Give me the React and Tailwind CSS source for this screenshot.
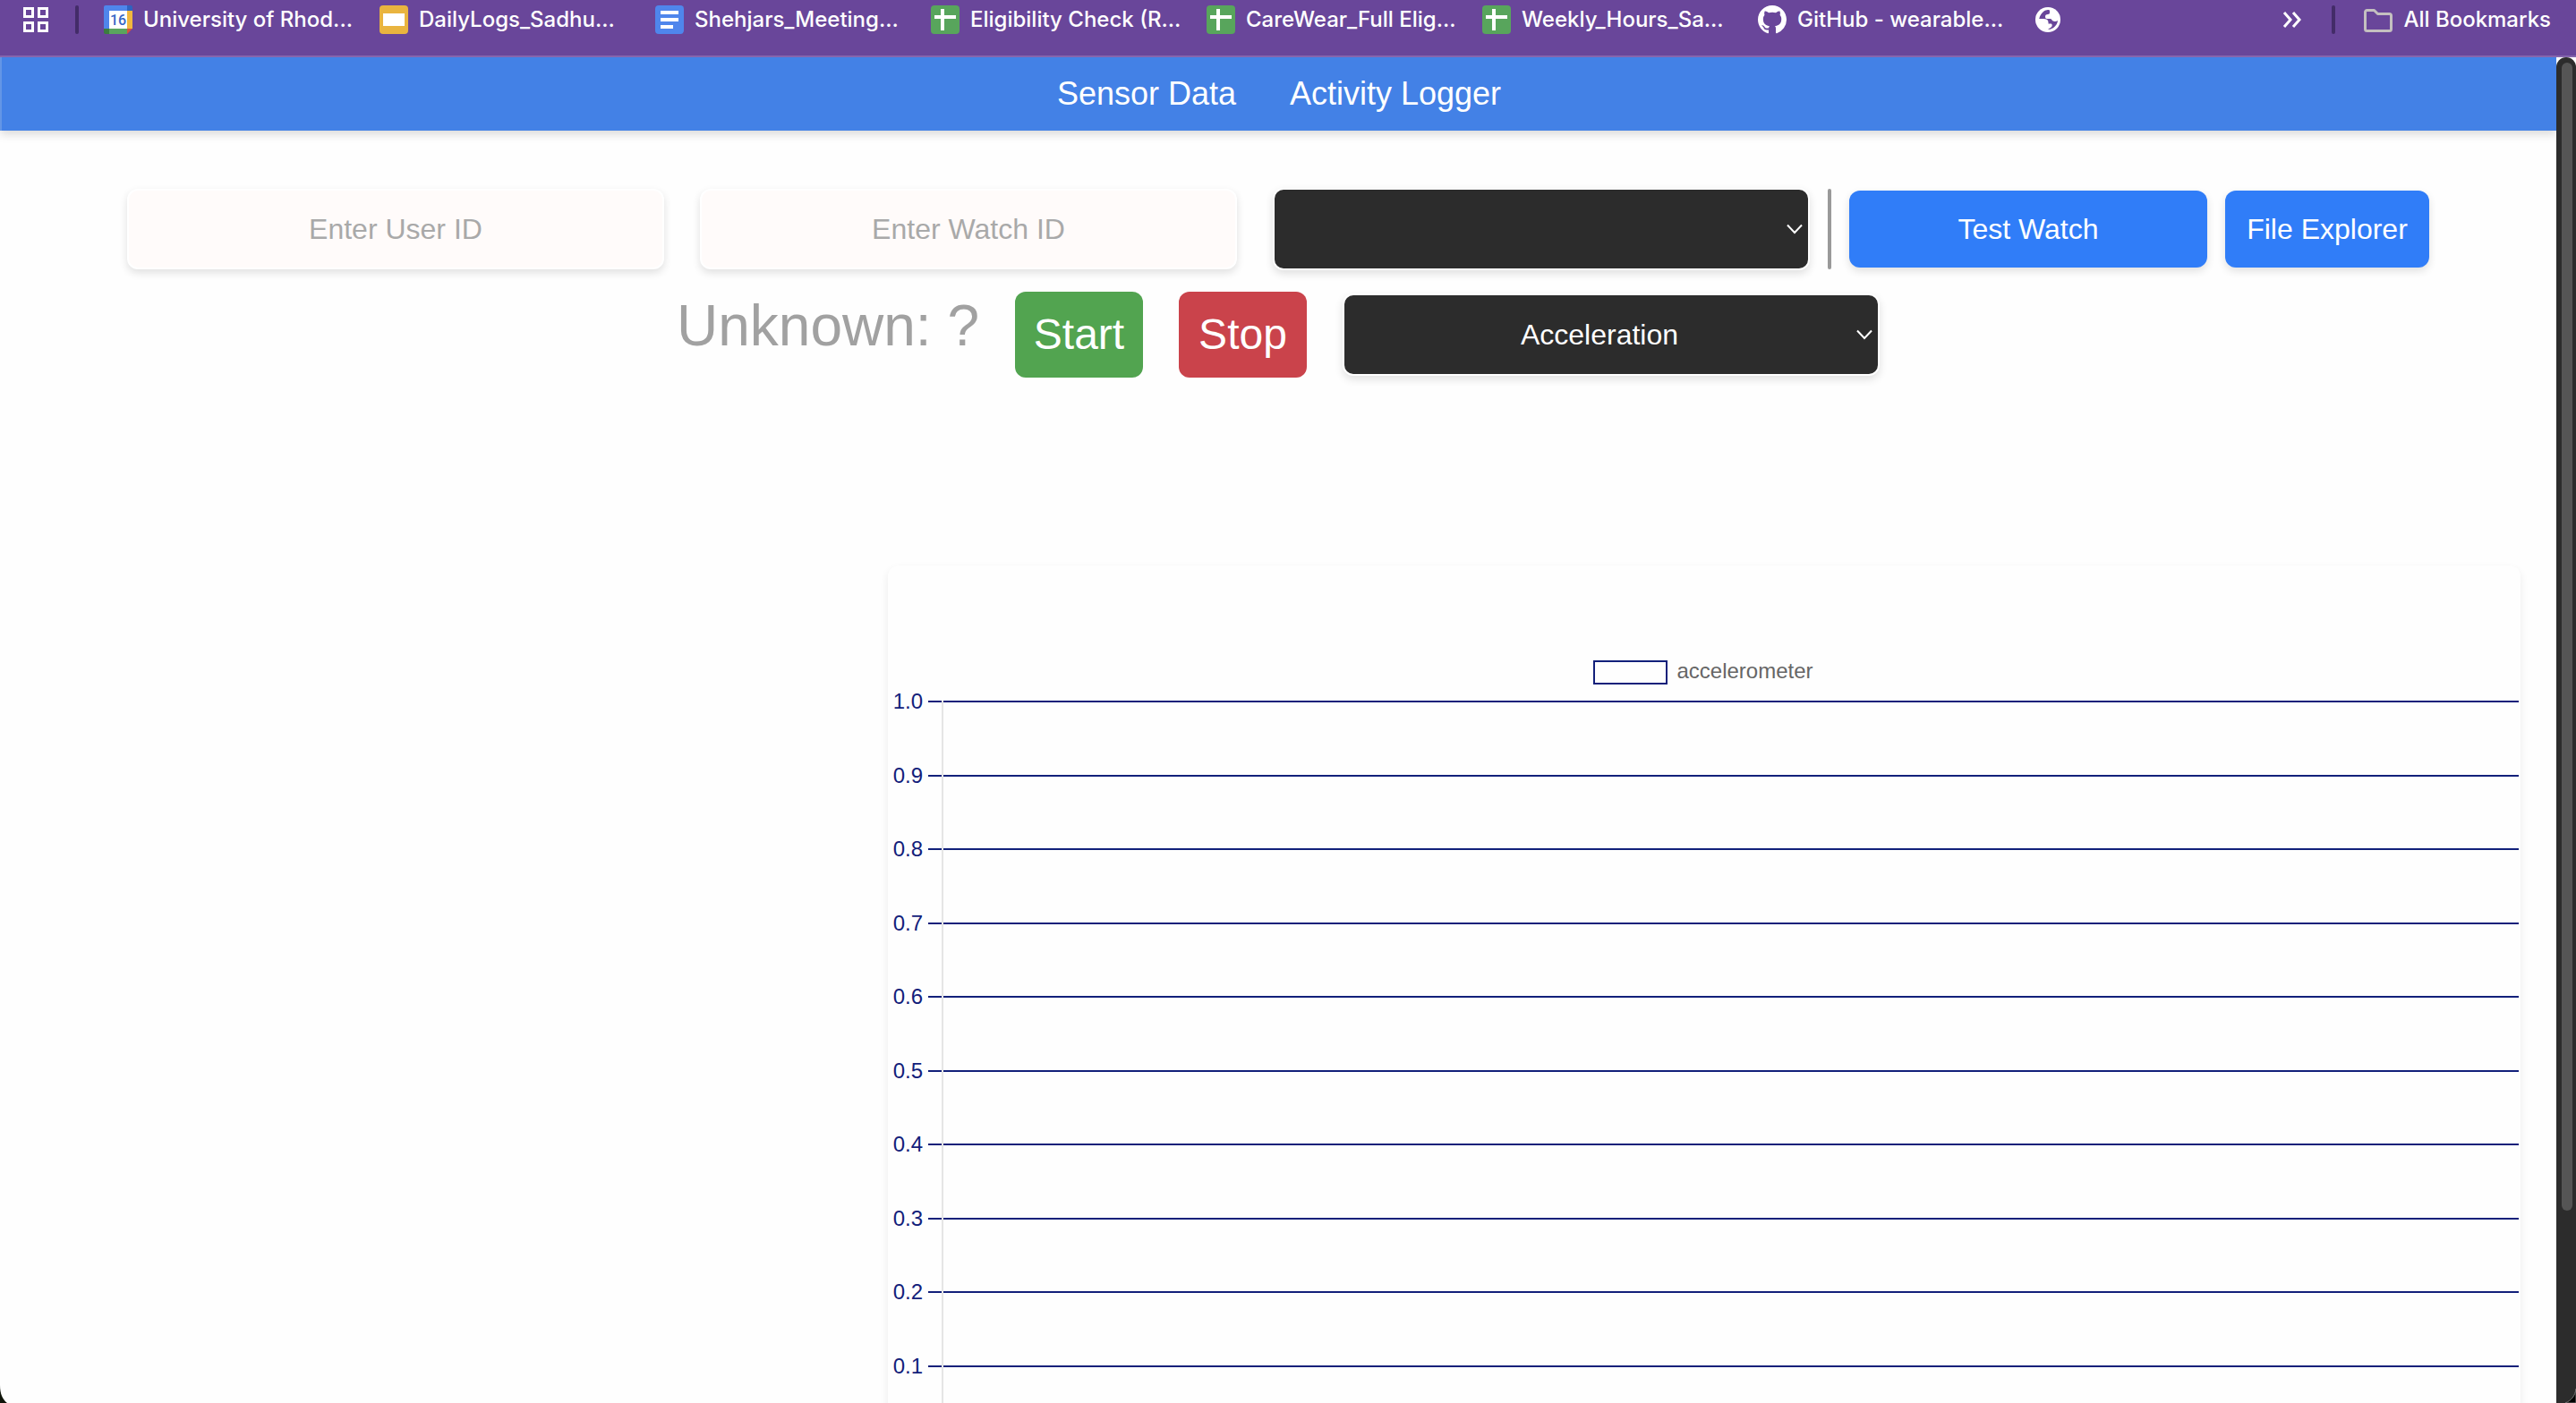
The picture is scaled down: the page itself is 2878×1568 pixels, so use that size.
import React from "react";

function CalendarIcon() {
  return (
    <svg viewBox="0 0 32 32" className="size-8 shrink-0" aria-hidden="true">
      <path d="M2 0h24v6H6v20H0V2a2 2 0 0 1 2-2z" fill="#4f86ec" />
      <path d="M26 0h4a2 2 0 0 1 2 2v4h-6z" fill="#2f63bf" />
      <path d="M26 6h6v20h-6z" fill="#f0b83f" />
      <path d="M6 26h20v6H6z" fill="#5aa55e" />
      <path d="M0 26h6v6H2a2 2 0 0 1-2-2z" fill="#3c7d40" />
      <path d="M26 26h6l-6 6z" fill="#d9503f" />
      <path d="M6 6h20v20H6z" fill="#fff" />
      <text x="16" y="22" textAnchor="middle" fontSize="16" fontWeight="500" fontFamily="Roboto, sans-serif" fill="#3567c6">16</text>
    </svg>
  );
}

function SlidesIcon() {
  return (
    <svg viewBox="0 0 32 32" className="size-8 shrink-0" aria-hidden="true">
      <rect width="32" height="32" rx="4" fill="#e9b43f" />
      <rect x="4" y="9" width="24" height="14" fill="#fff" />
    </svg>
  );
}

function DocsIcon() {
  return (
    <svg viewBox="0 0 32 32" className="size-8 shrink-0" aria-hidden="true">
      <rect width="32" height="32" rx="4" fill="#4f86ec" />
      <path d="M6 6h20v4H6zM6 14h20v4H6zM6 22h14v4H6z" fill="#fff" />
    </svg>
  );
}

function SheetsIcon() {
  return (
    <svg viewBox="0 0 32 32" className="size-8 shrink-0" aria-hidden="true">
      <rect width="32" height="32" rx="4" fill="#58a55c" />
      <path d="M11 4h4v7h13v4H15v13h-4V15H4v-4h7z" fill="#fff" />
    </svg>
  );
}

function GitHubIcon() {
  return (
    <svg viewBox="0 0 16 16" className="size-8 shrink-0" fill="#fff" aria-hidden="true">
      <path d="M8 0C3.58 0 0 3.58 0 8c0 3.54 2.29 6.53 5.47 7.59.4.07.55-.17.55-.38 0-.19-.01-.82-.01-1.49-2.01.37-2.53-.49-2.69-.94-.09-.23-.48-.94-.82-1.13-.28-.15-.68-.52-.01-.53.63-.01 1.08.58 1.23.82.72 1.21 1.87.87 2.33.66.07-.52.28-.87.51-1.07-1.78-.2-3.64-.89-3.64-3.95 0-.87.31-1.59.82-2.15-.08-.2-.36-1.02.08-2.12 0 0 .67-.21 2.2.82.64-.18 1.32-.27 2-.27.68 0 1.36.09 2 .27 1.53-1.04 2.2-.82 2.2-.82.44 1.1.16 1.92.08 2.12.51.56.82 1.27.82 2.15 0 3.07-1.87 3.75-3.65 3.95.29.25.54.73.54 1.48 0 1.07-.01 1.93-.01 2.2 0 .21.15.46.55.38A8.013 8.013 0 0 0 16 8c0-4.42-3.58-8-8-8z" />
    </svg>
  );
}

function GlobeIcon() {
  return (
    <svg viewBox="0 0 32 32" className="size-8" aria-hidden="true">
      <circle cx="16" cy="16" r="14" fill="#fff" />
      <path
        d="M17 5c-1 0-4 .3-6 2-1.500 1.400-4 4-4.800 8h5.300c3 0 5 1.500 5 4v1.500h2.500c1.500 0 1.800 1 1.600 2.500-.3 1.800-2.600 2-4.600 3.800 4.500.6 10.500-3.800 11-9.800-1.500 1-3.500 1.200-5.200.6-1.300-.5-1.600-2.600-3.300-2.600H15c-1.500 0-2-1-2-2.500 0-1.800 1.500-2.500 3-2.500s2-.8 2-2V6.500c0-.8-.5-1.500-1-1.500z"
        fill="#69469a"
      />
    </svg>
  );
}

const bookmarks = [
  { label: "University of Rhod...", Icon: CalendarIcon },
  { label: "DailyLogs_Sadhu...", Icon: SlidesIcon },
  { label: "Shehjars_Meeting...", Icon: DocsIcon },
  { label: "Eligibility Check (R...", Icon: SheetsIcon },
  { label: "CareWear_Full Elig...", Icon: SheetsIcon },
  { label: "Weekly_Hours_Sa...", Icon: SheetsIcon },
  { label: "GitHub - wearable...", Icon: GitHubIcon },
];

function BookmarksBar() {
  return (
    <header className="flex h-16 shrink-0 items-start border-b-2 border-[#8566ae] bg-[#69469a] pt-[6px] pr-7 pl-6 font-['Inter',sans-serif] text-2xl leading-8 font-medium text-white">
      <button type="button" aria-label="Apps" className="shrink-0">
        <svg viewBox="0 0 32 32" className="size-8" fill="none" stroke="#fff" strokeWidth="3" aria-hidden="true">
          <path d="M3.500 3.500h9v9h-9zM19.500 3.500h9v9h-9zM3.500 19.500h9v9h-9zM19.500 19.500h9v9h-9z" />
        </svg>
      </button>
      <span className="mr-7 ml-7 h-8 w-1 shrink-0 rounded-full bg-[#432c68]" />
      <nav className="flex min-w-0 flex-1" aria-label="Bookmarks">
        {bookmarks.map(({ label, Icon }) => (
          <a key={label} href="#" className="flex w-[308px] shrink-0 gap-3 whitespace-nowrap">
            <Icon />
            {label}
          </a>
        ))}
        <a href="#" aria-label="Web page" className="shrink-0">
          <GlobeIcon />
        </a>
      </nav>
      <button type="button" aria-label="More bookmarks" className="shrink-0">
        <svg viewBox="0 0 32 32" className="size-8" fill="none" stroke="#fff" strokeWidth="3" aria-hidden="true">
          <path d="M7 8l7 8-7 8M17 8l7 8-7 8" />
        </svg>
      </button>
      <span className="mr-8 ml-7 h-8 w-1 shrink-0 rounded-full bg-[#432c68]" />
      <a href="#" className="flex shrink-0 gap-3">
        <svg viewBox="0 0 32 32" className="size-8" fill="none" stroke="#c4c0c0" strokeWidth="3" strokeLinejoin="round" aria-hidden="true">
          <path d="M1.500 7.500a2 2 0 0 1 2-2h8l4 4h13a2 2 0 0 1 2 2v15a2 2 0 0 1-2 2h-25a2 2 0 0 1-2-2z" />
        </svg>
        All Bookmarks
      </a>
    </header>
  );
}

function Field({ label }) {
  return (
    <input
      type="text"
      aria-label={label}
      placeholder={label}
      className="h-[90px] w-[600px] rounded-xl border-2 border-white bg-[#fffbfa] text-center text-[32px] text-neutral-700 shadow-[0_4px_10px_rgba(0,0,0,0.12)] placeholder:text-[#a9a9a9]"
    />
  );
}

function Dropdown({ label, options }) {
  return (
    <div className="relative">
      <select
        aria-label={label}
        className="block h-[92px] w-[600px] appearance-none rounded-xl border-2 border-white bg-[#2c2c2c] pr-[26px] text-center text-[32px] text-white shadow-[0_4px_10px_rgba(0,0,0,0.12)] [text-align-last:center]"
      >
        {options.map((o) => (
          <option key={o}>{o}</option>
        ))}
      </select>
      <svg viewBox="0 0 18 12" className="pointer-events-none absolute top-10 right-2 h-3 w-[18px]" fill="none" stroke="#fff" strokeWidth="2" aria-hidden="true">
        <path d="M1 1.500l8 8.500 8-8.500" />
      </svg>
    </div>
  );
}

const ticks = ["1.0", "0.9", "0.8", "0.7", "0.6", "0.5", "0.4", "0.3", "0.2", "0.1"];

function Chart() {
  return (
    <section className="mr-10 ml-[992px] rounded-xl bg-[#fefefe] pt-26 pr-[2px] shadow-[0_4px_10px_rgba(0,0,0,0.08)]">
      <div className="flex h-8 items-start justify-center gap-[10px] text-2xl leading-7 text-[#666]">
        <span className="mt-[2px] h-[27px] w-[83px] border-2 border-[#12207a]" />
        accelerometer
      </div>
      <svg className="block h-[880px] w-full" role="img" aria-label="accelerometer chart">
        {ticks.map((t, i) => {
          const y = 16 + Math.round(i * 82.55);
          return (
            <g key={t} shapeRendering="crispEdges">
              <text x="39" y={y + 8} textAnchor="end" fontSize="24" fill="#12207a">
                {t}
              </text>
              <line x1="45" x2="100%" y1={y} y2={y} stroke="#12207a" strokeWidth="2" />
            </g>
          );
        })}
        <rect x="60" y="15" width="2" height="865" fill="#e5e5e5" />
      </svg>
    </section>
  );
}

export default function App() {
  return (
    <div className="relative flex h-screen flex-col overflow-hidden bg-[#fefefe] font-['Liberation_Sans',Arial,sans-serif]">
      <BookmarksBar />
      <div className="flex min-h-0 flex-1">
        <div className="min-w-0 flex-1 overflow-hidden">
          <nav className="flex h-[82px] items-center justify-center gap-[60px] border-l-2 border-[#6396e6] bg-[#4381e6] text-4xl text-white shadow-[0_4px_10px_rgba(0,0,0,0.15)]" aria-label="Main">
            <a href="#">Sensor Data</a>
            <a href="#">Activity Logger</a>
          </nav>
          <main className="pt-16">
            <div className="flex items-center justify-center gap-5">
              <div className="flex items-center gap-10">
                <Field label="Enter User ID" />
                <Field label="Enter Watch ID" />
                <Dropdown label="Device" options={[""]} />
              </div>
              <span className="h-[90px] w-1 rounded-full bg-[#999]" />
              <button type="button" className="h-[86px] w-[400px] rounded-xl bg-[#307df8] text-[32px] text-white shadow-[0_4px_10px_rgba(0,0,0,0.12)]">
                Test Watch
              </button>
              <button type="button" className="h-[86px] w-[228px] rounded-xl bg-[#307df8] text-[32px] text-white shadow-[0_4px_10px_rgba(0,0,0,0.12)]">
                File Explorer
              </button>
            </div>
            <div className="mt-6 mb-[210px] flex h-24 items-center justify-center gap-10">
              <p className="self-start text-[64px] leading-[76px] text-[#a1a1a1]">Unknown: ?</p>
              <button type="button" className="h-24 w-[143px] rounded-xl bg-[#52a450] text-5xl text-white">
                Start
              </button>
              <button type="button" className="h-24 w-[143px] rounded-xl bg-[#ca434b] text-5xl text-white">
                Stop
              </button>
              <Dropdown label="Sensor" options={["Acceleration", "Gyroscope", "Heart Rate"]} />
            </div>
            <Chart />
          </main>
        </div>
        <div className="flex w-[22px] shrink-0 flex-col rounded-t-full rounded-bl-xl bg-[#2c2c2c] px-[5px] py-[6px]">
          <div className="ml-px h-[86%] w-3 rounded-full bg-[#555]" />
        </div>
      </div>
      <svg viewBox="0 0 8 20" className="absolute bottom-0 left-0 h-5 w-2" aria-hidden="true">
        <path d="M0 0c0 10 3 16 8 20H0z" fill="#10140a" />
      </svg>
      <svg viewBox="0 0 12 16" className="absolute right-0 bottom-0 h-4 w-3" aria-hidden="true">
        <path d="M12 0c-1 8-5 13-12 16h12z" fill="#000" stroke="#777" strokeWidth="1" />
      </svg>
    </div>
  );
}
